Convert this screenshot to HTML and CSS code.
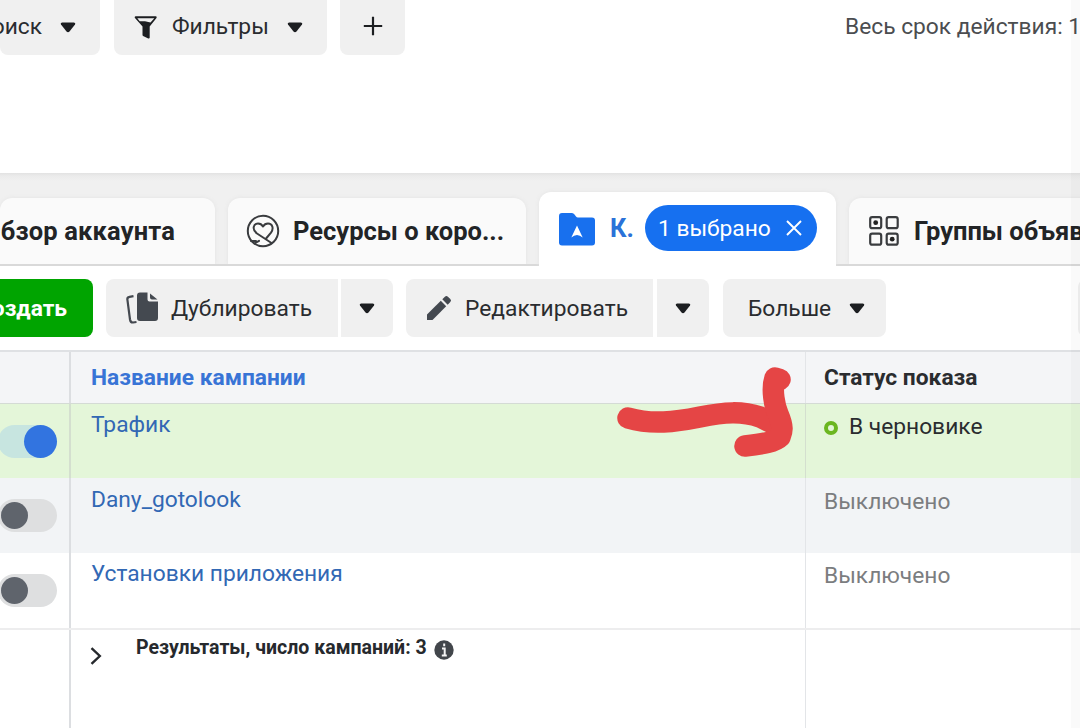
FILE: index.html
```html
<!DOCTYPE html>
<html lang="ru">
<head>
<meta charset="utf-8">
<title>Ads Manager</title>
<link rel="stylesheet" href="styles.css">
</head>
<body>
<div class="screen">
  <header class="filters">
    <div class="btn top search"><span class="t-search">Поиск</span><svg class="caret" width="16" height="11" viewBox="0 0 16 11"><path d="M2 .5h12q2 .3 1 2L9.500 9.500q-1.500 1.500-3 0L1 2.500q-1-1.700 1-2z"/></svg></div>
    <div class="btn top filter"><svg width="24" height="24" viewBox="0 0 24 24"><path d="M1.700 1.300h20L14.700 10v11.500L9.500 19v-9z" fill="#1c1e21" stroke="#1c1e21" stroke-width="2" stroke-linejoin="round"/><path d="M3.300 2.300h17L16.500 6.600l-5.500-1.400H5.700z" fill="#f0f0f0"/></svg><span class="t-filter">Фильтры</span><svg class="caret" width="16" height="11" viewBox="0 0 16 11"><path d="M2 .5h12q2 .3 1 2L9.500 9.500q-1.500 1.500-3 0L1 2.500q-1-1.700 1-2z"/></svg></div>
    <div class="btn top plus"><svg width="20" height="20" viewBox="0 0 20 20"><path d="M10 .8v18.400M.8 10h18.400" stroke="#1c1e21" stroke-width="2.200"/></svg></div>
    <div class="period">Весь срок действия: 1</div>
  </header>

  <nav class="tabs">
    <div class="tab overview"><span class="t-overview">Обзор аккаунта</span></div>
    <div class="tab resources"><svg width="34" height="34" viewBox="0 0 34 34" fill="none" stroke="#3a3c3f" stroke-width="2" stroke-linecap="round" stroke-linejoin="round"><circle cx="17" cy="17" r="15.200"/><path d="M25.500 29 11 19.500C5.500 15.500 7.500 9.500 12 9.500c2.500 0 4 1.300 5 3 1-1.700 2.500-3 5-3 4.500 0 6 5 3 9.200L20.500 24M8.500 29.500 13 26.800M5 27h5"/></svg><span class="t-resources">Ресурсы о коро...</span></div>
    <div class="tab active"><svg width="36" height="33" viewBox="0 0 36 33"><path d="M3 0h10q1.500 0 2.500 1.500l1.500 2q.7 1 2 1h14q3 0 3 3V29.500q0 3-3 3H3q-3 0-3-3V3Q0 0 3 0z" fill="#1870ee"/><path d="m18 12.500 5.700 12q-2.800-2.500-5.700-2.500t-5.700 2.500z" fill="#fff"/></svg><span class="t-k">К.</span><span class="pill"><span class="t-pill">1 выбрано</span><svg width="16" height="16" viewBox="0 0 16 16"><path d="m1 1 14 14M15 1 1 15" stroke="#fff" stroke-width="1.900"/></svg></span></div>
    <div class="tab groups"><svg width="30" height="30" viewBox="0 0 30 30" fill="none" stroke="#3a3c3f" stroke-width="2.200"><rect x="1.200" y="1.200" width="11" height="11" rx="2"/><rect x="17.700" y="1.200" width="11" height="11" rx="2"/><rect x="1.200" y="17.700" width="11" height="11" rx="2"/><rect x="17.700" y="17.700" width="11" height="11" rx="2"/><circle cx="6.700" cy="6.700" r="2.400" fill="#222" stroke="none"/><circle cx="23.200" cy="23.200" r="2.400" fill="#222" stroke="none"/></svg><span class="t-groups">Группы объявлений</span></div>
  </nav>

  <section class="toolbar">
    <div class="btn create"><span class="t-create">Создать</span></div>
    <div class="btn dup"><svg width="32" height="32" viewBox="0 0 32 32"><path d="M7.500 4.200 3.500 4.900Q1 5.400 1.400 7.700L4 27.500q.5 3.200 3 3L10.500 30" fill="none" stroke="#444950" stroke-width="2.200"/><path d="M14 .500h7.500v7q0 2 2 2H32v16.500q0 3-3 3H14q-3 0-3-3V3.500q0-3 3-3zM24 1.500 31.500 7.500h-5.500q-2 0-2-2z" fill="#444950"/></svg><span class="t-dup">Дублировать</span></div>
    <div class="btn drop"><svg class="caret" width="16" height="11" viewBox="0 0 16 11"><path d="M2 .5h12q2 .3 1 2L9.500 9.500q-1.500 1.500-3 0L1 2.500q-1-1.700 1-2z"/></svg></div>
    <div class="btn edit"><svg width="26" height="26" viewBox="0 0 26 26" fill="#444950"><path d="M1 19.500 14.800 5.800l5.400 5.400L6.500 25H1.500Q1 25 1 24.500z"/><path d="m16.300 4.300 2.600-2.600q1.500-1.500 3 0l2.400 2.400q1.500 1.500 0 3l-2.600 2.600z"/></svg><span class="t-edit">Редактировать</span></div>
    <div class="btn drop second"><svg class="caret" width="16" height="11" viewBox="0 0 16 11"><path d="M2 .5h12q2 .3 1 2L9.500 9.500q-1.500 1.500-3 0L1 2.500q-1-1.700 1-2z"/></svg></div>
    <div class="btn more"><span class="t-more">Больше</span><svg class="caret" width="16" height="11" viewBox="0 0 16 11"><path d="M2 .5h12q2 .3 1 2L9.500 9.500q-1.500 1.500-3 0L1 2.500q-1-1.700 1-2z"/></svg></div>
    <div class="btn cut"></div>
  </section>

  <main class="grid">
    <div class="row head"><div class="c1"></div><div class="c2"><span class="t-name">Название кампании</span></div><div class="c3"><span class="t-status">Статус показа</span></div></div>
    <div class="row green"><div class="c1"><i class="switch on"></i></div><div class="c2"><span class="t-r1">Трафик</span></div><div class="c3"><i class="ring"></i><span class="t-draft">В черновике</span></div></div>
    <div class="row grey"><div class="c1"><i class="switch"></i></div><div class="c2"><span class="t-r2">Dany_gotolook</span></div><div class="c3"><span class="t-off">Выключено</span></div></div>
    <div class="row white"><div class="c1"><i class="switch"></i></div><div class="c2"><span class="t-r3">Установки приложения</span></div><div class="c3"><span class="t-off">Выключено</span></div></div>
    <div class="row total"><div class="c1"></div><div class="c2"><svg class="chev" width="12" height="18" viewBox="0 0 12 18"><path d="m1.500 1.200 8.300 7.800-8.300 7.800" fill="none" stroke="#26292d" stroke-width="2.400"/></svg><span class="t-total">Результаты, число кампаний: 3</span><svg class="info" width="20" height="20" viewBox="0 0 20 20"><circle cx="10" cy="10" r="9.700" fill="#42464b"/><path d="M10.200 3.600v2.600M8 8.500h2.700v7M7.800 15.500h5" stroke="#f4f4f4" stroke-width="2" fill="none"/></svg></div><div class="c3"></div></div>
  </main>

  <svg class="arrow" width="180" height="94" viewBox="615 365 180 94" fill="none" stroke="#e54545" stroke-width="21.500" stroke-linecap="round" stroke-linejoin="round"><path d="M628 418C652 425 675 422 700 417S742 411 760 417L778 426"/><path d="M780 379.500 775 378C771 390 775 407 778 414 784 428 782 432 780 437 775 442 763 444 745 446"/></svg>
  <div class="edge"></div>
</div>
</body>
</html>
```
FILE: styles.css
```css
* { box-sizing: border-box; }
body { margin: 0; font-family: Roboto, "Noto Sans", sans-serif; font-size: 22.75px; color: #2a2c2f; }
.screen { position: relative; width: 1080px; height: 728px; overflow: hidden; background: #fff; }
span { white-space: nowrap; line-height: 28px; }
svg { flex: none; display: block; }
.caret { fill: #1c1e21; }
.btn { display: flex; flex: none; align-items: center; height: 58px; border-radius: 8px; background: #f0f0f0; overflow: hidden; }
.toolbar .btn span { padding-top: 1px; }

.filters { display: flex; height: 173px; align-items: flex-start; }
.top { height: 55px; border-radius: 0 0 8px 8px; }
.top span { margin-top: -1px; }
.search { width: 100px; justify-content: flex-end; padding-right: 24px; gap: 18px; }
.filter { width: 213px; margin-left: 14px; padding-left: 20px; }
.filter .caret { margin-left: 18px; }
.t-filter { margin-left: 14px; }
.plus { width: 65px; margin-left: 13px; justify-content: center; padding-bottom: 3px; }
.period { margin: 13px 0 0 440px; white-space: nowrap; line-height: 28px; color: #4b4d50; }

.tabs { display: flex; align-items: flex-end; height: 93px; background: linear-gradient(#e2e2e2 0, #ebebeb 3px, #f0f0f0 8px, #f0f0f0 100%); box-shadow: inset 0 -2px #d9d9d9; }
.tab { display: flex; flex: none; align-items: center; height: 66px; margin-bottom: 2px; border-radius: 12px 12px 0 0; background: #fafafa; font-size: 25.5px; font-weight: 700; overflow: hidden; box-shadow: 0 0 4px #e3e3e3; clip-path: inset(-4px -4px 0 -4px); color: #222426; }
.overview { width: 215px; justify-content: flex-end; padding-right: 40px; letter-spacing: .15px; }
.resources { width: 298px; margin-left: 13px; padding-left: 18px; }
.t-resources { margin-left: 13px; }
.active { width: 297px; height: 74px; margin: 0 0 0 13px; padding-left: 20px; background: #fff; }
.t-k { margin: -2px 0 0 15px; color: #2a72d8; width: 34px; }
.pill { display: flex; align-items: center; width: 172px; height: 46px; margin: -2px 0 0 1px; padding-left: 13px; border-radius: 23px; background: #1670f0; color: #fff; font-size: 22.75px; font-weight: 400; }
.t-pill { padding-top: 1px; }
.pill svg { margin-left: 15px; }
.groups { width: 260px; margin-left: 13px; padding-left: 20px; }
.t-groups { margin-left: 15px; }

.toolbar { display: flex; height: 84px; padding-top: 13px; }
.create { width: 93px; justify-content: flex-end; padding-right: 26px; border-radius: 0 8px 8px 0; background: #00a400; color: #fff; font-weight: 700; }
.dup { width: 232px; margin-left: 13px; padding-left: 20px; border-radius: 8px 0 0 8px; }
.t-dup { margin-left: 13px; }
.drop { width: 52px; margin-left: 3px; justify-content: center; border-radius: 0 8px 8px 0; }
.edit { width: 247px; margin-left: 13px; padding-left: 20px; border-radius: 8px 0 0 8px; }
.t-edit { margin-left: 13px; }
.second { margin-left: 4px; }
.more { width: 163px; margin-left: 14px; padding-left: 25px; }
.more .caret { margin-left: 18px; }
.cut { width: 60px; margin-left: 192px; }

.row { display: grid; grid-template-columns: 71px 735px 274px; }
.row > div { display: flex; align-items: flex-start; }
.c1 { border-right: 2px solid #dcdee1; }
.c2 { padding-left: 20px; border-right: 1px solid #e3e5e8; color: #3268b4; }
.c3 { padding-left: 18px; }
.head { height: 54px; border-top: 2px solid #dfe1e4; border-bottom: 1px solid #d4dbd5; background: #f4f5f7; font-weight: 700; }
.head span { margin-top: 12px; }
.head .c2 { color: #3874d6; }
.green { height: 74px; background: #e4f6d9; }
.green span { margin-top: 7px; }
.green .t-draft { margin: 9px 0 0 11px; }
.green .c1, .green .c2 { border-color: #d4dfcf; }
.grey { height: 75px; background: #f2f4f6; }
.white { height: 77px; border-bottom: 2px solid #ededee; }
.grey span, .white span { margin-top: 8px; }
.grey .t-off, .white .t-off { margin-top: 10px; color: #7b7d80; }
.white span { margin-top: 7px; }
.white .t-off { margin-top: 9px; }
.total { height: 99px; font-size: 19.55px; font-weight: 700; }
.total .c2 { color: #26292d; }
.chev { margin: 17px 0 0 -1px; }
.t-total { margin: 4px 0 0 34px; }
.info { margin: 10px 0 0 7px; }
.switch { display: flex; align-items: center; flex: none; width: 59px; height: 33px; margin: 21px 0 0 -2px; padding-left: 3px; border-radius: 17px; background: #dedfe0; }
.switch::before { content: ""; width: 27px; height: 27px; border-radius: 50%; background: #5f646c; }
.switch.on { background: #c7e5e0; padding-left: 26px; }
.switch.on::before { width: 33px; height: 33px; background: #3274e0; }
.ring { width: 14px; height: 14px; margin-top: 17px; border: 4px solid #6bb620; border-radius: 50%; }
.arrow { position: absolute; left: 615px; top: 365px; }
.edge { position: absolute; top: 0; right: 0; width: 9px; height: 728px; background: rgba(0, 0, 0, .018); }
```
